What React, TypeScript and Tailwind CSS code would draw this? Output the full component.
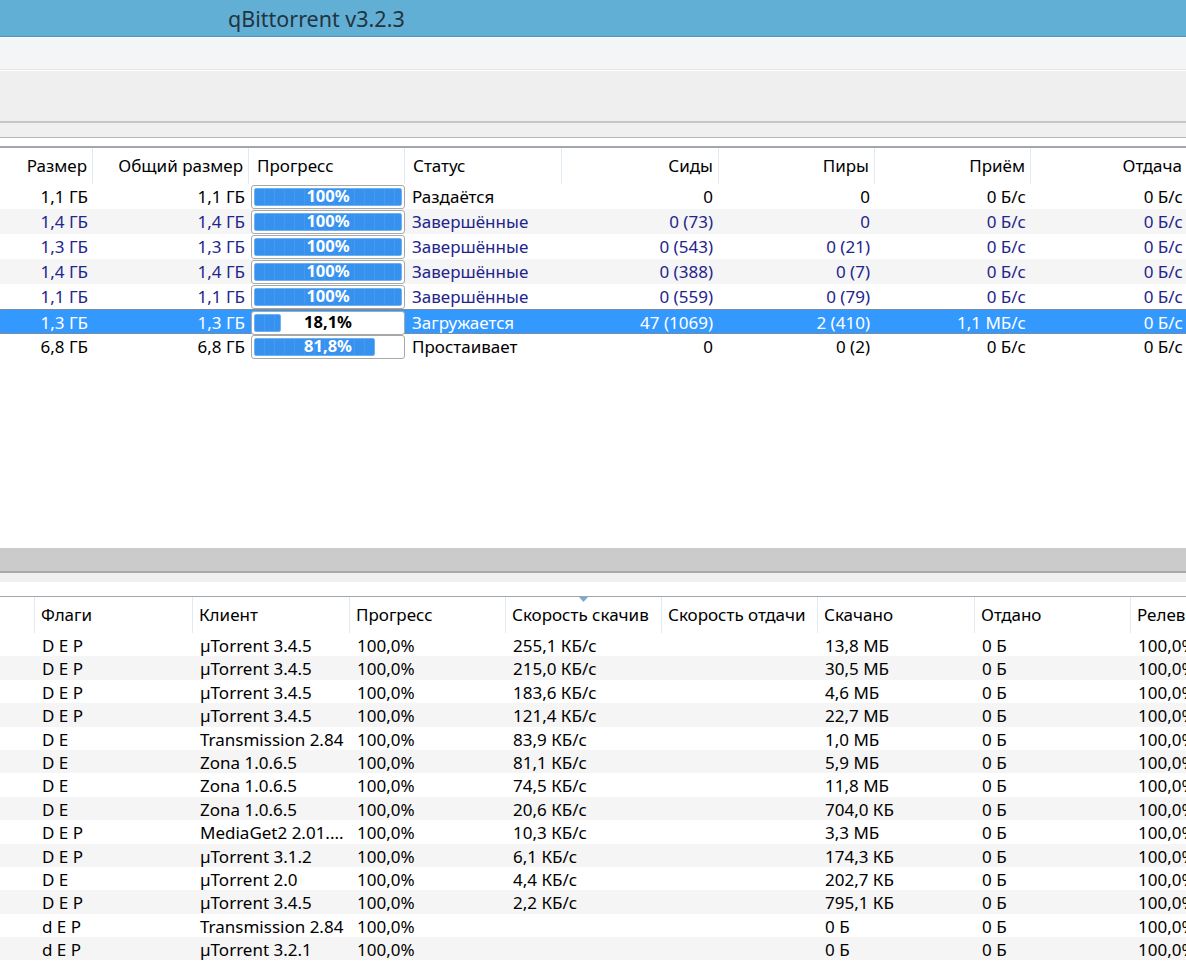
import React from "react";

type TopRow = {
  size: string;
  total: string;
  pct: number;
  label: string;
  status: string;
  seeds: string;
  peers: string;
  down: string;
  up: string;
  kind: "normal" | "done" | "selected";
};

const topRows: TopRow[] = [
  { size: "1,1 ГБ", total: "1,1 ГБ", pct: 100, label: "100%", status: "Раздаётся", seeds: "0", peers: "0", down: "0 Б/с", up: "0 Б/с", kind: "normal" },
  { size: "1,4 ГБ", total: "1,4 ГБ", pct: 100, label: "100%", status: "Завершённые", seeds: "0 (73)", peers: "0", down: "0 Б/с", up: "0 Б/с", kind: "done" },
  { size: "1,3 ГБ", total: "1,3 ГБ", pct: 100, label: "100%", status: "Завершённые", seeds: "0 (543)", peers: "0 (21)", down: "0 Б/с", up: "0 Б/с", kind: "done" },
  { size: "1,4 ГБ", total: "1,4 ГБ", pct: 100, label: "100%", status: "Завершённые", seeds: "0 (388)", peers: "0 (7)", down: "0 Б/с", up: "0 Б/с", kind: "done" },
  { size: "1,1 ГБ", total: "1,1 ГБ", pct: 100, label: "100%", status: "Завершённые", seeds: "0 (559)", peers: "0 (79)", down: "0 Б/с", up: "0 Б/с", kind: "done" },
  { size: "1,3 ГБ", total: "1,3 ГБ", pct: 18.1, label: "18,1%", status: "Загружается", seeds: "47 (1069)", peers: "2 (410)", down: "1,1 МБ/с", up: "0 Б/с", kind: "selected" },
  { size: "6,8 ГБ", total: "6,8 ГБ", pct: 81.8, label: "81,8%", status: "Простаивает", seeds: "0", peers: "0 (2)", down: "0 Б/с", up: "0 Б/с", kind: "normal" },
];

const peers: [string, string, string, string][] = [
  ["D E P", "µTorrent 3.4.5", "255,1 КБ/с", "13,8 МБ"],
  ["D E P", "µTorrent 3.4.5", "215,0 КБ/с", "30,5 МБ"],
  ["D E P", "µTorrent 3.4.5", "183,6 КБ/с", "4,6 МБ"],
  ["D E P", "µTorrent 3.4.5", "121,4 КБ/с", "22,7 МБ"],
  ["D E", "Transmission 2.84", "83,9 КБ/с", "1,0 МБ"],
  ["D E", "Zona 1.0.6.5", "81,1 КБ/с", "5,9 МБ"],
  ["D E", "Zona 1.0.6.5", "74,5 КБ/с", "11,8 МБ"],
  ["D E", "Zona 1.0.6.5", "20,6 КБ/с", "704,0 КБ"],
  ["D E P", "MediaGet2 2.01....", "10,3 КБ/с", "3,3 МБ"],
  ["D E P", "µTorrent 3.1.2", "6,1 КБ/с", "174,3 КБ"],
  ["D E", "µTorrent 2.0", "4,4 КБ/с", "202,7 КБ"],
  ["D E P", "µTorrent 3.4.5", "2,2 КБ/с", "795,1 КБ"],
  ["d E P", "Transmission 2.84", "", "0 Б"],
  ["d E P", "µTorrent 3.2.1", "", "0 Б"],
];

const topCols = "grid-cols-[93px_156px_156px_157px_157px_156px_156px_157px]";
const peerCols = "grid-cols-[35px_158px_157px_156px_156px_156px_157px_156px_156px]";

function Bar({ pct, label, dark }: { pct: number; label: string; dark: boolean }) {
  return (
    <div className="relative ml-[2px] h-[24px] rounded-[3px] border border-[#a8a8a8] bg-white p-[2px]">
      <div
        className="h-full rounded-[2px] border border-[#6fb0f3] bg-[repeating-linear-gradient(90deg,#3791ee_0px,#3791ee_9px,#4599f0_9px,#4599f0_10px)]"
        style={{ width: `${pct}%` }}
      />
      <span
        className={`absolute inset-0 flex items-center justify-center font-bold text-[16.5px] ${dark ? "text-black" : "text-white"}`}
      >
        {label}
      </span>
    </div>
  );
}

export default function App() {
  return (
    <div className="w-[1186px] h-[963px] overflow-hidden bg-white text-[17px] text-black font-['Noto_Sans',sans-serif]">
      {/* title bar */}
      <div className="h-[37px] bg-[#62afd6] border-b border-[#4c95bd] pl-[228px] pt-[3px] flex items-center text-[21.5px] text-[#24343e]">
        qBittorrent v3.2.3
      </div>
      {/* menu + toolbar */}
      <div className="h-[33px] bg-[#f4f5f7] border-t border-white border-b border-b-[#e6e6e8]" />
      <div className="h-[51px] bg-[#efefef] border-t border-white" />
      <div className="h-[2px] bg-[#c6c6c6]" />
      <div className="h-[14px] bg-[#f0f0f0]" />
      <div className="h-[1px] bg-[#b8b8b8]" />
      <div className="h-[8px] bg-white" />
      <div className="h-[2px] bg-[#a2a6ad]" />

      {/* torrents table */}
      <div className="h-[400px] overflow-hidden">
        <div className={`grid ${topCols} h-[36px] items-stretch`}>
          {[
            ["Размер", "r"],
            ["Общий размер", "r"],
            ["Прогресс", "l"],
            ["Статус", "l"],
            ["Сиды", "r"],
            ["Пиры", "r"],
            ["Приём", "r"],
            ["Отдача", "r"],
          ].map(([t, a]) => (
            <div
              key={t}
              className={`flex items-center border-r border-[#e1e9f2] whitespace-nowrap overflow-hidden ${a === "r" ? "justify-end pr-[5px]" : "pl-[8px]"}`}
            >
              {t}
            </div>
          ))}
        </div>
        {topRows.map((r, i) => {
          const sel = r.kind === "selected";
          const bg = sel ? "bg-[#3399ff] text-white border-y border-dotted border-[#c0803e]" : i % 2 === 1 ? "bg-[#f5f5f5]" : "bg-white";
          const color = sel ? "" : r.kind === "done" ? "text-[#24248c]" : "text-black";
          return (
            <div key={i} className={`grid ${topCols} h-[25px] items-center whitespace-nowrap ${bg} ${color}`}>
              <div className="text-right pr-[5px]">{r.size}</div>
              <div className="text-right pr-[4px]">{r.total}</div>
              <Bar pct={r.pct} label={r.label} dark={sel} />
              <div className="pl-[7px]">{r.status}</div>
              <div className="text-right pr-[6px]">{r.seeds}</div>
              <div className="text-right pr-[5px]">{r.peers}</div>
              <div className="text-right pr-[5px]">{r.down}</div>
              <div className="text-right pr-[5px]">{r.up}</div>
            </div>
          );
        })}
      </div>

      {/* splitter */}
      <div className="h-[23px] bg-[#cbcbcb]" />
      <div className="h-[2px] bg-[#a9a9a9]" />
      <div className="h-[9px] bg-[#f0f0f0]" />
      <div className="h-[14px] bg-white" />
      <div className="h-[1px] bg-[#a2a6ad]" />

      {/* peers table */}
      <div className={`grid ${peerCols} h-[36px] whitespace-nowrap`}>
        {["", "Флаги", "Клиент", "Прогресс", "Скорость скачив", "Скорость отдачи", "Скачано", "Отдано", "Релев"].map((t, i) => (
          <div key={i} className="relative flex items-center pl-[6px] border-r border-[#e1e9f2] overflow-hidden">
            {t}
            {i === 4 && (
              <svg className="absolute left-[73px] top-0" width="9" height="5" viewBox="0 0 9 5">
                <path d="M0 0 H9 L4.5 5 Z" fill="#7aa9d6" />
              </svg>
            )}
          </div>
        ))}
      </div>
      {peers.map((p, i) => (
        <div
          key={i}
          className={`grid ${peerCols} h-[23.4px] items-center whitespace-nowrap ${i % 2 === 1 ? "bg-[#f5f5f5]" : "bg-white"}`}
        >
          <div />
          <div className="pl-[7px]">{p[0]}</div>
          <div className="pl-[7px] overflow-hidden">{p[1]}</div>
          <div className="pl-[7px]">100,0%</div>
          <div className="pl-[7px]">{p[2]}</div>
          <div className="pl-[7px]"></div>
          <div className="pl-[7px]">{p[3]}</div>
          <div className="pl-[7px]">0 Б</div>
          <div className="pl-[7px]">100,0%</div>
        </div>
      ))}
    </div>
  );
}
